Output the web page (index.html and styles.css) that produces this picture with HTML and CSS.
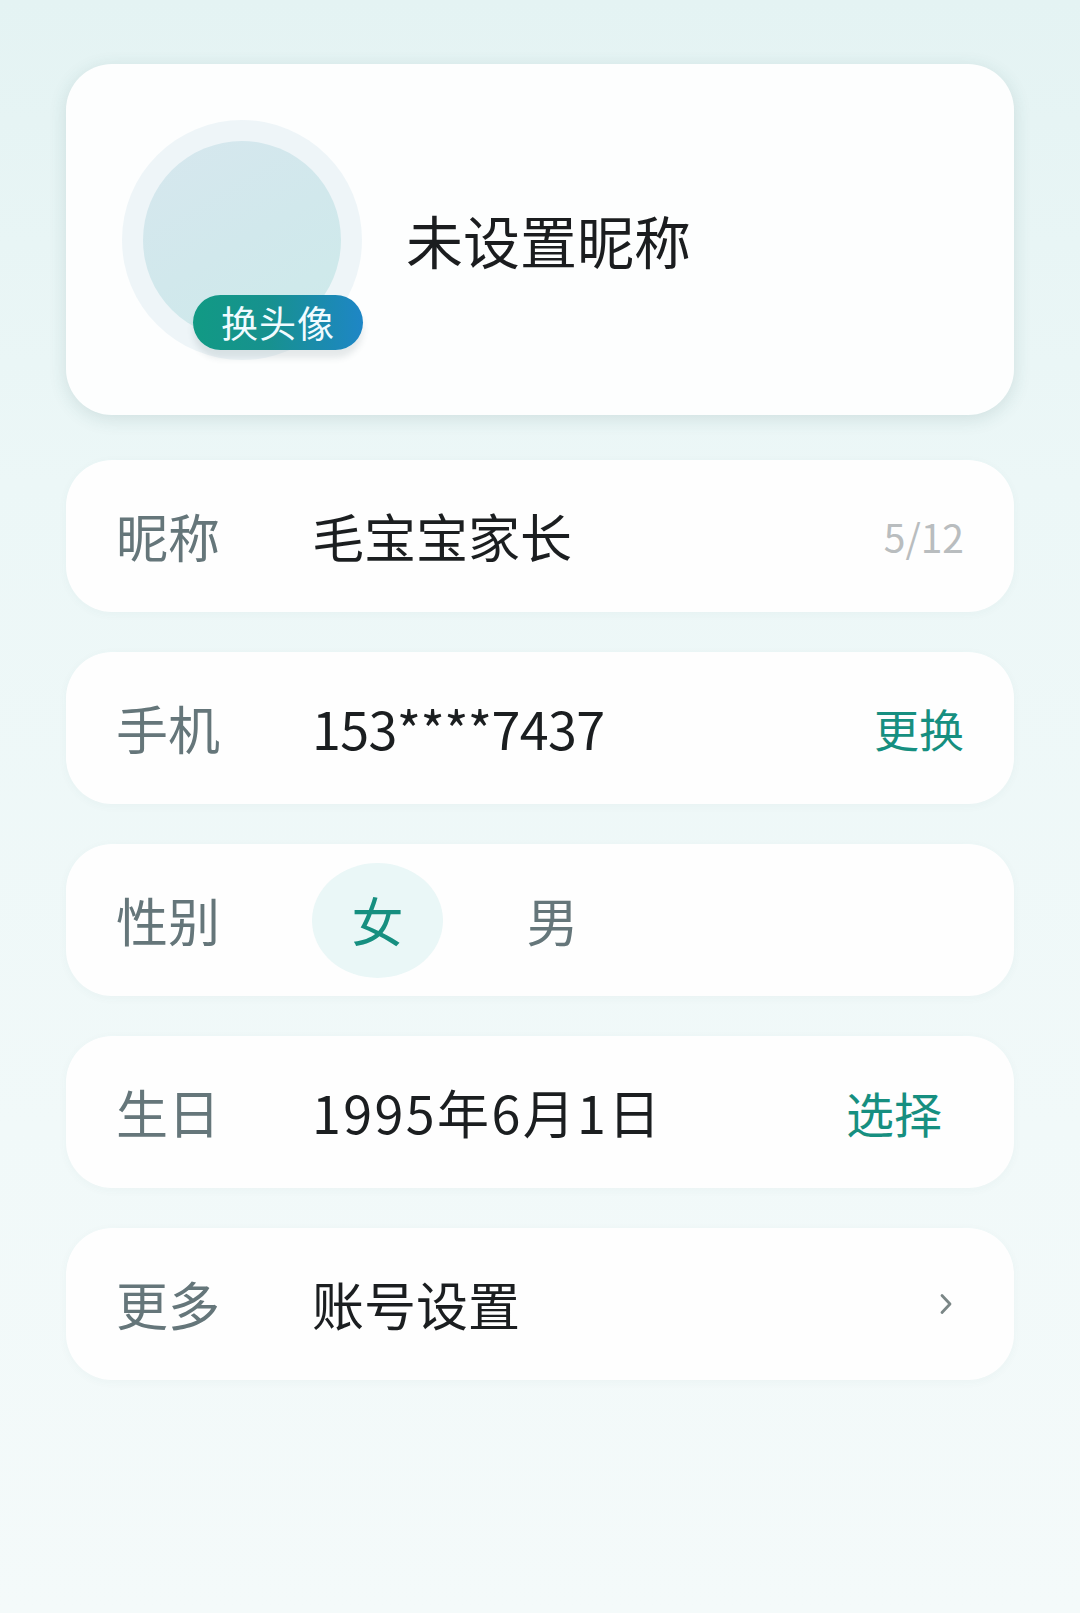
FILE: index.html
```html
<!DOCTYPE html>
<html lang="zh-CN">
<head>
<meta charset="utf-8">
<title>个人资料</title>
<link rel="stylesheet" href="styles.css">
</head>
<body>
<div class="page">
  <section class="profile-card">
    <div class="avatar">
      <div class="avatar-inner"></div>
      <div class="avatar-badge">换头像</div>
    </div>
    <div class="profile-name">未设置昵称</div>
  </section>

  <div class="row">
    <div class="row-label">昵称</div>
    <div class="row-value">毛宝宝家长</div>
    <div class="row-count">5/12</div>
  </div>

  <div class="row">
    <div class="row-label">手机</div>
    <div class="row-value row-value-phone">153****7437</div>
    <div class="row-action">更换</div>
  </div>

  <div class="row">
    <div class="row-label">性别</div>
    <div class="gender">
      <div class="gender-opt gender-opt-active">女</div>
      <div class="gender-opt">男</div>
    </div>
  </div>

  <div class="row">
    <div class="row-label">生日</div>
    <div class="row-value row-value-date">1995年6月1日</div>
    <div class="row-action row-action-inset">选择</div>
  </div>

  <div class="row">
    <div class="row-label">更多</div>
    <div class="row-value">账号设置</div>
    <svg class="chevron" width="14" height="22" viewBox="0 0 14 22">
      <path d="M3 2.5 L11 11 L3 19.5" fill="none" stroke="#7a8686" stroke-width="2.8" stroke-linecap="round" stroke-linejoin="round"/>
    </svg>
  </div>
</div>
</body>
</html>
```

FILE: styles.css
```css
html, body {
  margin: 0;
  padding: 0;
}

body {
  width: 1080px;
  height: 1613px;
  overflow: hidden;
  font-family: "Noto Sans CJK SC", "Noto Sans", sans-serif;
  background: linear-gradient(180deg, #e4f3f3 0%, #ecf7f7 30%, #f1f9f9 70%, #f4fafa 100%);
}

.page {
  padding: 64px 66px 0;
  display: flex;
  flex-direction: column;
  gap: 40px;
}

.profile-card {
  height: 351px;
  box-sizing: border-box;
  background: #fdfefe;
  border-radius: 46px;
  box-shadow: 0 4px 18px rgba(40, 90, 90, 0.14);
  display: flex;
  align-items: center;
  padding: 0 56px;
  gap: 44px;
  margin-bottom: 5px;
}

.avatar {
  position: relative;
  width: 240px;
  height: 240px;
  flex: none;
  border-radius: 50%;
  background: radial-gradient(circle at 50% 50%, #eef5f8 70%, #f1f7f9 100%);
  display: flex;
  align-items: center;
  justify-content: center;
}

.avatar-inner {
  width: 198px;
  height: 198px;
  border-radius: 50%;
  background: linear-gradient(150deg, #d6e7ee 0%, #d1e8ec 50%, #cdeaea 100%);
}

.avatar-badge {
  position: absolute;
  left: 71px;
  top: 175px;
  width: 170px;
  height: 55px;
  border-radius: 28px;
  background: linear-gradient(90deg, #119a84 0%, #17918f 45%, #1e86c6 100%);
  box-shadow: 0 8px 6px rgba(60, 80, 90, 0.12);
  color: #f0fbff;
  font-size: 37px;
  line-height: 55px;
  text-align: center;
  letter-spacing: 1px;
}

.profile-name {
  font-size: 57px;
  font-weight: 400;
  color: #1b1d1f;
  line-height: 1;
}

.row {
  height: 152px;
  box-sizing: border-box;
  background: #fefefe;
  border-radius: 46px;
  box-shadow: 0 2px 10px rgba(40, 100, 100, 0.04);
  display: flex;
  align-items: center;
  padding: 0 50px;
}

.row-label {
  width: 196px;
  flex: none;
  font-size: 52px;
  color: #65767a;
  line-height: 1;
}

.row-value {
  flex: 1;
  font-size: 52px;
  color: #1b1e20;
  line-height: 1;
}

.row-value-phone {
  letter-spacing: -0.6px;
}

.row-value-date {
  letter-spacing: 2.4px;
}

.row-count {
  font-size: 39px;
  color: #b9bdbf;
  line-height: 1;
}

.row-action {
  font-size: 45px;
  color: #168f80;
  line-height: 1;
}

.row-action-inset {
  margin-right: 22px;
  font-size: 48px;
}

.chevron {
  margin-right: 11px;
  flex: none;
}

.gender {
  display: flex;
  align-items: center;
  gap: 44px;
}

.gender-opt {
  width: 131px;
  height: 115px;
  border-radius: 50%;
  display: flex;
  align-items: center;
  justify-content: center;
  font-size: 52px;
  color: #65767a;
  line-height: 1;
}

.gender-opt-active {
  background: #eaf7f7;
  color: #168f80;
}
```
